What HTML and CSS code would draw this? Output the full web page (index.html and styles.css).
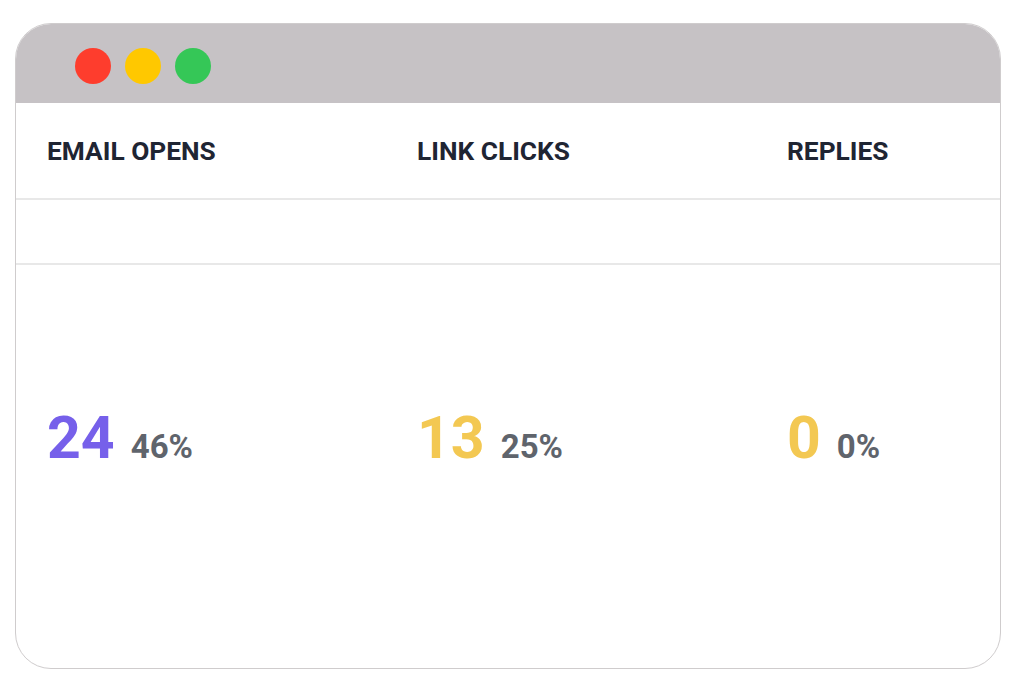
FILE: index.html
```html
<!DOCTYPE html>
<html>
<head>
<meta charset="utf-8">
<link rel="stylesheet" href="styles.css">
</head>
<body>
<div class="window">
  <div class="titlebar">
    <span class="dot red"></span>
    <span class="dot yellow"></span>
    <span class="dot green"></span>
  </div>
  <div class="row header">
    <div class="cell">EMAIL OPENS</div>
    <div class="cell">LINK CLICKS</div>
    <div class="cell">REPLIES</div>
  </div>
  <div class="row spacer"></div>
  <div class="row stats">
    <div class="cell"><span class="num purple">24</span><span class="pct">46%</span></div>
    <div class="cell"><span class="num gold">13</span><span class="pct">25%</span></div>
    <div class="cell"><span class="num gold">0</span><span class="pct">0%</span></div>
  </div>
</div>
</body>
</html>
```

FILE: styles.css
```css
html, body {
  margin: 0;
  padding: 0;
  background: #ffffff;
}
body {
  font-family: Roboto, "Liberation Sans", sans-serif;
  padding: 23px 0 0 15px;
}
.window {
  width: 984px;
  height: 644px;
  border: 1.5px solid #cfcccd;
  border-radius: 36px;
  overflow: hidden;
  background: #ffffff;
  display: flex;
  flex-direction: column;
}
.titlebar {
  height: 79px;
  flex: none;
  background: #c6c2c5;
  display: flex;
  align-items: center;
  padding: 5px 0 0 59px;
  box-sizing: border-box;
  gap: 14px;
}
.dot {
  width: 36px;
  height: 36px;
  border-radius: 50%;
  display: block;
}
.red { background: #fe3d2d; }
.yellow { background: #ffc800; }
.green { background: #35c757; }
.row {
  display: grid;
  grid-template-columns: 370px 370px 370px;
  padding-left: 31px;
  flex: none;
}
.header {
  height: 95px;
  align-items: center;
  border-bottom: 2px solid #e8e8e8;
  font-size: 26.3px;
  font-weight: 700;
  color: #1f2533;
  white-space: nowrap;
}
.spacer {
  height: 63px;
  border-bottom: 2px solid #e8e8e8;
}
.stats {
  flex: 1;
  align-items: center;
  padding-bottom: 58px;
}
.stats .cell {
  display: flex;
  align-items: baseline;
  white-space: nowrap;
}
.num {
  font-size: 59px;
  font-weight: 700;
  line-height: 1;
}
.purple { color: #7660ea; }
.gold { color: #f3c852; }
.pct {
  font-size: 33px;
  font-weight: 700;
  color: #5f646c;
  margin-left: 16px;
}
```
